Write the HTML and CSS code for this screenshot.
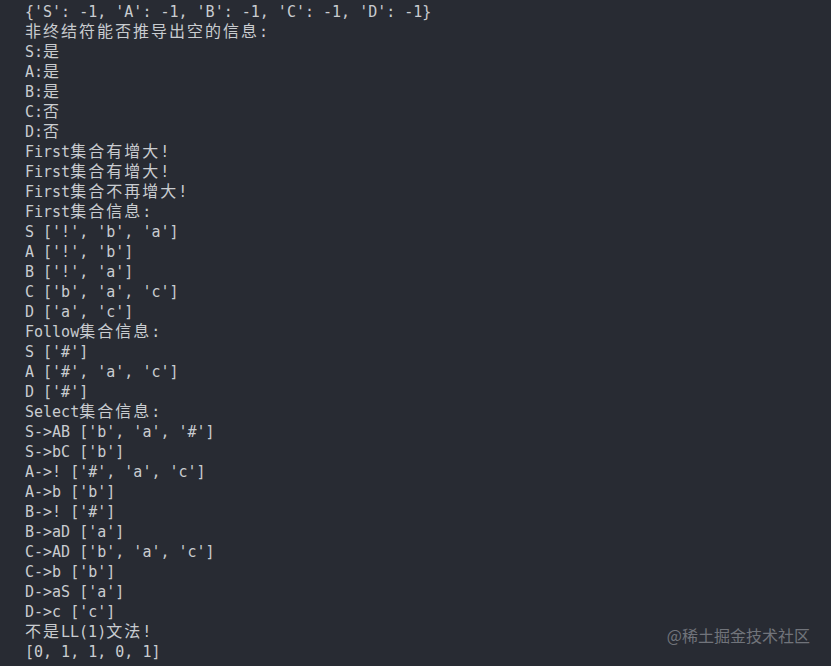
FILE: index.html
```html
<!DOCTYPE html>
<html lang="zh">
<head>
<meta charset="utf-8">
<title>terminal</title>
<link rel="stylesheet" href="styles.css">
</head>
<body>
<div class="term">
<div class="line">{'S': -1, 'A': -1, 'B': -1, 'C': -1, 'D': -1}</div>
<div class="line"><span class="zh">非终结符能否推导出空的信息</span>:</div>
<div class="line">S:<span class="zh">是</span></div>
<div class="line">A:<span class="zh">是</span></div>
<div class="line">B:<span class="zh">是</span></div>
<div class="line">C:<span class="zh">否</span></div>
<div class="line">D:<span class="zh">否</span></div>
<div class="line">First<span class="zh">集合有增大</span>!</div>
<div class="line">First<span class="zh">集合有增大</span>!</div>
<div class="line">First<span class="zh">集合不再增大</span>!</div>
<div class="line">First<span class="zh">集合信息</span>:</div>
<div class="line">S ['!', 'b', 'a']</div>
<div class="line">A ['!', 'b']</div>
<div class="line">B ['!', 'a']</div>
<div class="line">C ['b', 'a', 'c']</div>
<div class="line">D ['a', 'c']</div>
<div class="line">Follow<span class="zh">集合信息</span>:</div>
<div class="line">S ['#']</div>
<div class="line">A ['#', 'a', 'c']</div>
<div class="line">D ['#']</div>
<div class="line">Select<span class="zh">集合信息</span>:</div>
<div class="line">S-&gt;AB ['b', 'a', '#']</div>
<div class="line">S-&gt;bC ['b']</div>
<div class="line">A-&gt;! ['#', 'a', 'c']</div>
<div class="line">A-&gt;b ['b']</div>
<div class="line">B-&gt;! ['#']</div>
<div class="line">B-&gt;aD ['a']</div>
<div class="line">C-&gt;AD ['b', 'a', 'c']</div>
<div class="line">C-&gt;b ['b']</div>
<div class="line">D-&gt;aS ['a']</div>
<div class="line">D-&gt;c ['c']</div>
<div class="line"><span class="zh">不是</span>LL(1)<span class="zh">文法</span>!</div>
<div class="line">[0, 1, 1, 0, 1]</div>
</div>
<div class="watermark">@稀土掘金技术社区</div>
</body>
</html>
```
FILE: styles.css
```css
html, body {
  margin: 0;
  padding: 0;
  height: 100%;
  overflow: hidden;
  background: #282b33;
}
body {
  position: relative;
}
.term {
  padding: 2px 0 0 25px;
  font-family: "DejaVu Sans Mono", "Liberation Mono", monospace;
  font-size: 15px;
  line-height: 20px;
  color: #c9ccd0;
}
.line {
  height: 20px;
  white-space: pre;
}
.zh {
  font-family: "Noto Sans CJK SC", sans-serif;
  font-size: 16px;
  line-height: 16px;
  letter-spacing: 2px;
}
.watermark {
  position: absolute;
  right: 21px;
  bottom: 20px;
  font-family: "Noto Sans CJK SC", sans-serif;
  font-size: 16px;
  line-height: 22px;
  color: #71747b;
}
```
